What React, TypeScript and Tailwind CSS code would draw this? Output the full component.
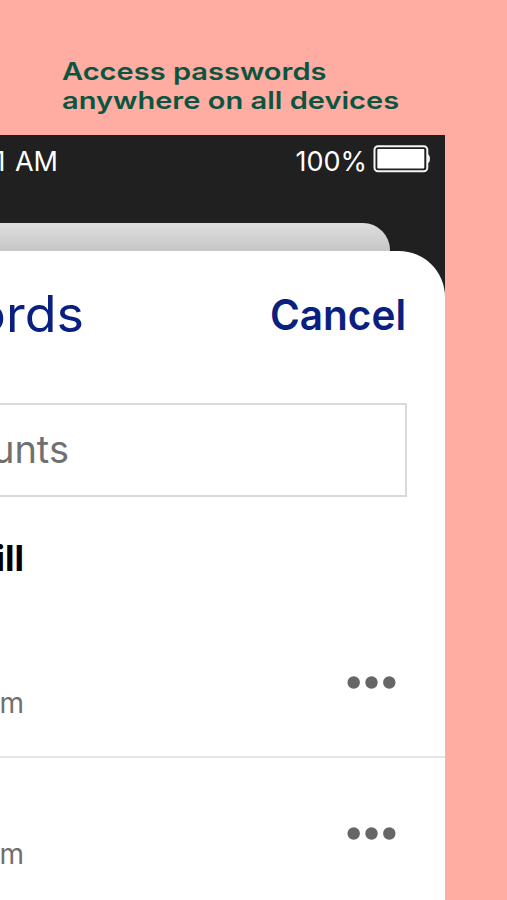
import React from 'react';
import clsx from 'clsx';

interface AccountRowProps {
  detail: string;
  divider?: boolean;
}

const Battery: React.FC = () => (
  <svg className="-mt-px" width="58" height="28" viewBox="0 0 58 28" fill="none">
    <rect x="1.5" y="1.2" width="52.8" height="25" rx="3.5" stroke="#f5f5f5" strokeWidth="2" />
    <rect x="4.3" y="4" width="47" height="19.5" rx="1" fill="#fff" />
    <path d="M55 9.5c1.4.4 1.9 2 1.9 4.2s-.5 3.8-1.9 4.2z" fill="#f5f5f5" />
  </svg>
);

const StatusBar: React.FC = () => (
  <div className="flex h-[88px] items-start justify-between pt-[11px] pr-[14px] text-[27px] leading-8 text-white">
    <div className="flex w-[58px] justify-end whitespace-nowrap [word-spacing:2px]">1 AM</div>
    <div className="flex">
      <span className="mr-[6px]">100%</span>
      <Battery />
    </div>
  </div>
);

const MoreButton: React.FC = () => (
  <button type="button" className="flex">
    <svg width="49" height="13" viewBox="0 0 49 13" fill="#666">
      <circle cx="6.7" cy="6.5" r="6.2" />
      <circle cx="24.5" cy="6.5" r="6.2" />
      <circle cx="42.3" cy="6.5" r="6.2" />
    </svg>
  </button>
);

const AccountRow: React.FC<AccountRowProps> = ({ detail, divider }) => (
  <div className={clsx('flex h-[151px] items-start justify-between pr-[49px]', divider && 'border-b-2 border-[#e5e5e5]')}>
    <div className="mt-[78px] flex w-[24px] justify-end text-[28px] leading-9 text-[#707070]">{detail}</div>
    <div className="mt-[69px]">
      <MoreButton />
    </div>
  </div>
);

const App: React.FC = () => {
  return (
    <div className="h-[900px] w-[507px] overflow-hidden bg-[#ffada3] font-['Inter',sans-serif]">
      <h1 className="h-[135px] pt-[57px] pl-[62px] text-[24px] leading-[29px] font-semibold text-[#0b5540]">
        <span className="block w-max origin-left scale-x-[1.21]">Access passwords</span>
        <span className="block w-max origin-left scale-x-[1.21]">anywhere on all devices</span>
      </h1>

      <div className="h-[765px] w-[445px] overflow-hidden bg-[#202020]">
        <StatusBar />
        <div className="h-[28px] w-[390px] rounded-tr-[27px] bg-linear-to-b from-[#dedede] to-[#c6c6c6]" />

        <div className="h-[649px] rounded-tr-[46px] bg-white">
          <div className="flex h-[152px] justify-between pt-[33px] pr-[39px] text-[#0a2080]">
            <div className="flex w-[84px] origin-right scale-x-[1.04] justify-end text-[50px] leading-[60px]">ords</div>
            <button type="button" className="h-[60px] origin-right scale-x-[0.965] text-[42px] leading-[62px] font-semibold">Cancel</button>
          </div>

          <div className="flex h-[94px] w-[407px] items-center border-2 border-l-0 border-[#d9d9d9]">
            <div className="flex w-[69px] justify-end pb-[3px] text-[38px] leading-none text-[#707070]">unts</div>
          </div>

          <div className="flex h-[110px] w-[24px] justify-end pt-[40px] text-[35px] leading-[42px] font-bold text-black">ill</div>

          <AccountRow detail="m" divider />
          <AccountRow detail="m" />
        </div>
      </div>
    </div>
  );
};

export default App;
